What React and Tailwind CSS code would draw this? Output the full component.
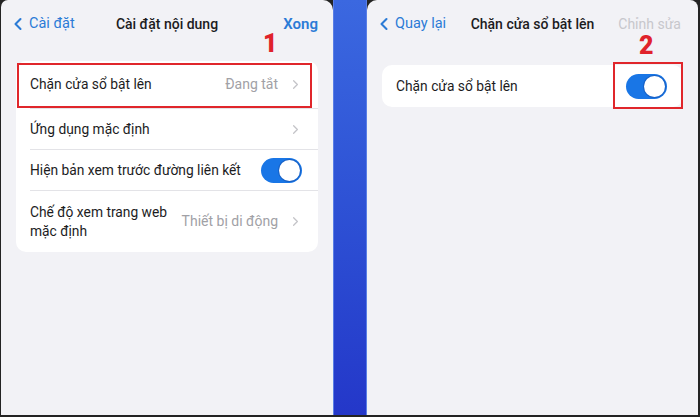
import { ChevronLeft, ChevronRight } from 'lucide-react'

function Toggle() {
  return (
    <div className="w-[41px] h-[25px] rounded-full bg-[#1976e6] p-[2px] flex justify-end shrink-0">
      <div className="w-[21px] h-[21px] rounded-full bg-white shadow-[0_0_0_1px_rgba(20,60,140,0.35)]" />
    </div>
  )
}

function Row({ label, value, toggle, last, h }) {
  return (
    <div className="pl-[14px]">
      <div className={`flex items-center pr-[16px] ${h} ${last ? '' : 'border-b border-[#e3e3e7]'}`}>
        <div className="flex-1 text-[13.8px] leading-[19px] text-[#1c1c1e] whitespace-nowrap">{label}</div>
        {value && <span className="text-[14px] text-[#a1a1a6] mr-[10px] whitespace-nowrap">{value}</span>}
        {toggle ? <Toggle /> : <ChevronRight size={15} strokeWidth={2} className="text-[#c4c4c8] -mr-[1px]" />}
      </div>
    </div>
  )
}

function NavBar({ back, title, action, actionClass }) {
  return (
    <div className="h-[48px] flex items-center px-[8px] relative">
      <div className="flex items-center text-[#2b7bd6] text-[14.5px]">
        <ChevronLeft size={20} strokeWidth={2.5} className="-ml-[1px]" />
        <span className="ml-[1px]">{back}</span>
      </div>
      <div className="absolute left-0 right-0 text-center text-[14px] font-medium text-[#1c1c1e] pointer-events-none">{title}</div>
      <div className={`ml-auto ${actionClass}`}>{action}</div>
    </div>
  )
}

export default function App() {
  return (
    <div className="w-[700px] h-[417px] bg-[#232323] flex pl-[1px] pr-[2px] pb-[2px] overflow-hidden" style={{ fontFamily: 'Roboto, "Noto Sans", sans-serif' }}>
      <div className="w-[332px] bg-[#f2f2f6] rounded-tl-[7px] rounded-tr-[10px] relative">
        <NavBar back="Cài đặt" title="Cài đặt nội dung" action="Xong" actionClass="text-[15px] font-semibold text-[#2b7bd6] mr-[7px]" />
        <div className="absolute left-[262px] top-[31px] text-[25px] font-black text-[#e0222b] leading-none">1</div>
        <div className="mx-[15px] mt-[13px] bg-white rounded-[10px] relative">
          <Row label="Chặn cửa sổ bật lên" value="Đang tắt" h="h-[48px]" />
          <Row label="Ứng dụng mặc định" h="h-[41px]" />
          <Row label="Hiện bản xem trước đường liên kết" toggle h="h-[41px]" />
          <Row label={<>Chế độ xem trang web<br />mặc định</>} value="Thiết bị di động" last h="h-[61px]" />
          <div className="absolute left-[1px] top-[2px] w-[295px] h-[45px] border-2 border-[#e0262b]" />
        </div>
      </div>

      <div className="w-[34px] bg-gradient-to-b from-[#3b68e0] to-[#2437c9] border-x border-[#5a7fe6]" />

      <div className="flex-1 bg-[#f2f2f6] rounded-tl-[10px] rounded-tr-[8px] relative">
        <NavBar back="Quay lại" title="Chặn cửa sổ bật lên" action="Chỉnh sửa" actionClass="text-[14px] text-[#c7c7cc] mr-[9px]" />
        <div className="absolute left-[272px] top-[33px] text-[25px] font-black text-[#e0222b] leading-none">2</div>
        <div className="mx-[15px] mt-[17px] bg-white rounded-[10px] relative">
          <Row label="Chặn cửa sổ bật lên" toggle last h="h-[42px]" />
          <div className="absolute left-[231px] -top-[3px] w-[70px] h-[47px] border-2 border-[#e0262b]" />
        </div>
      </div>
    </div>
  )
}
